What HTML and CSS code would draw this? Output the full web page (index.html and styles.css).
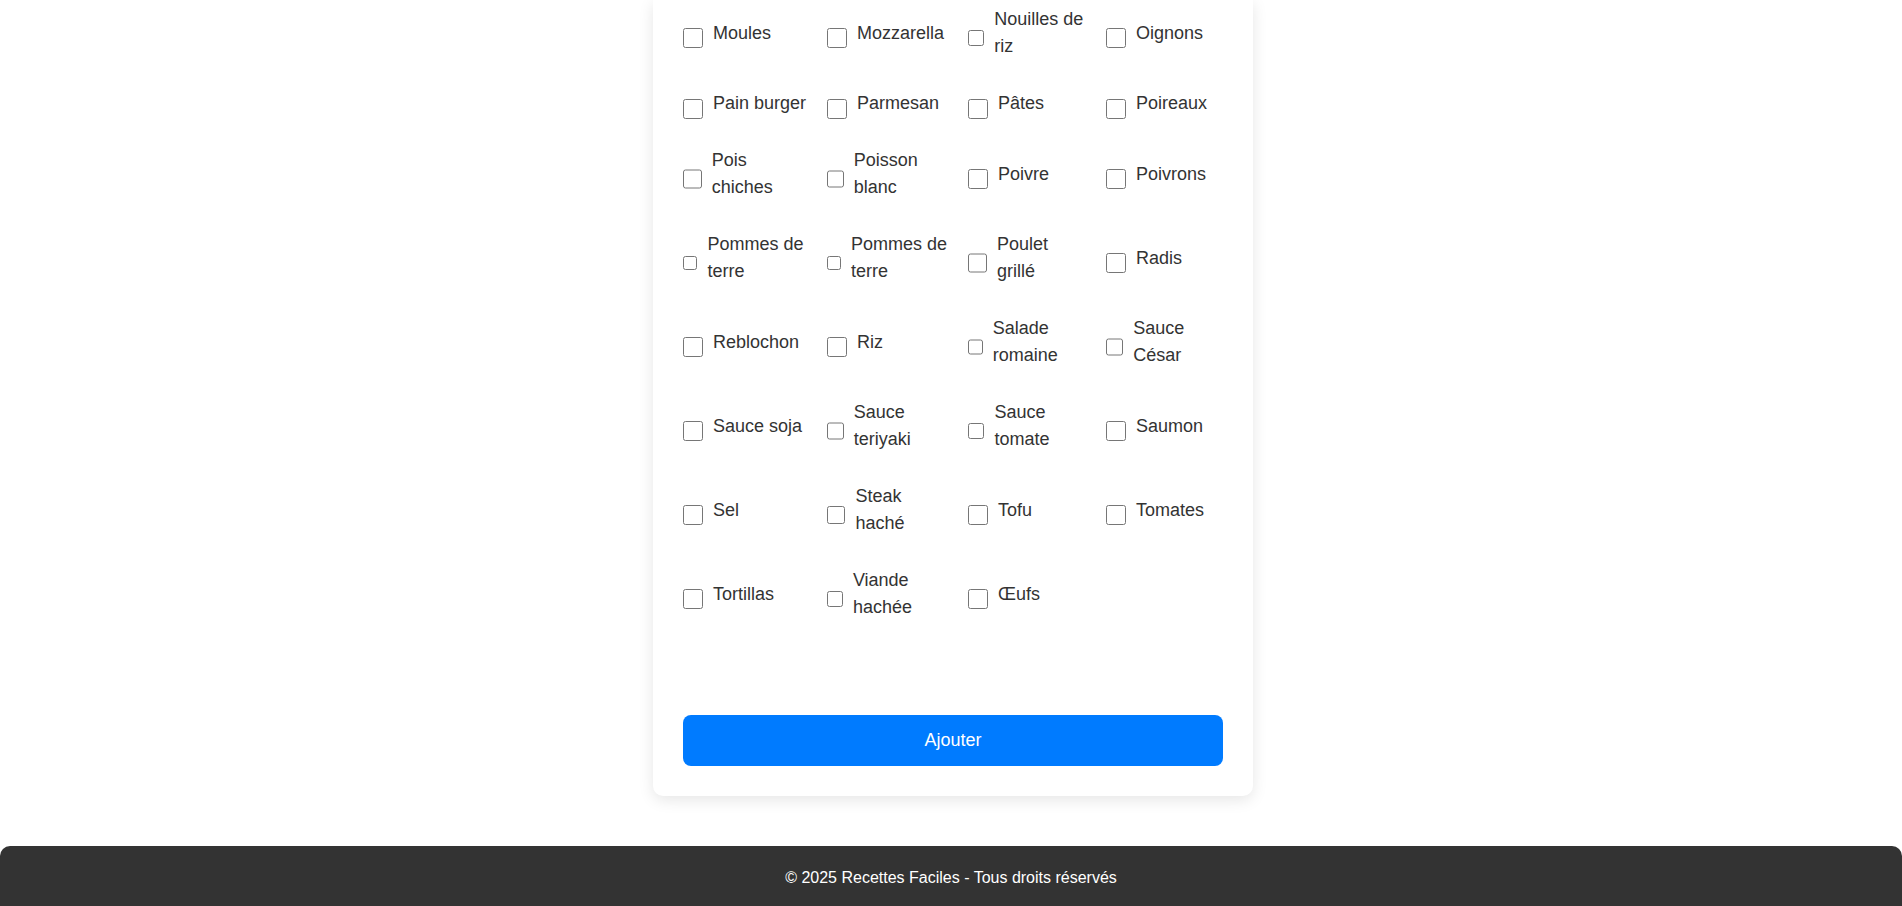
FILE: index.html
```html
<!DOCTYPE html>
<html lang="fr">
<head>
<meta charset="utf-8">
<title>Recettes Faciles - Ajouter une recette</title>
<link rel="stylesheet" href="styles.css">
</head>
<body>
<main class="page">
  <form class="card">
    <div class="ingredients">
      <label class="ing"><input type="checkbox">Moules</label>
      <label class="ing"><input type="checkbox">Mozzarella</label>
      <label class="ing"><input type="checkbox">Nouilles de riz</label>
      <label class="ing"><input type="checkbox">Oignons</label>
      <label class="ing"><input type="checkbox">Pain burger</label>
      <label class="ing"><input type="checkbox">Parmesan</label>
      <label class="ing"><input type="checkbox">Pâtes</label>
      <label class="ing"><input type="checkbox">Poireaux</label>
      <label class="ing"><input type="checkbox">Pois chiches</label>
      <label class="ing"><input type="checkbox">Poisson blanc</label>
      <label class="ing"><input type="checkbox">Poivre</label>
      <label class="ing"><input type="checkbox">Poivrons</label>
      <label class="ing"><input type="checkbox">Pommes de terre</label>
      <label class="ing"><input type="checkbox">Pommes de terre</label>
      <label class="ing"><input type="checkbox">Poulet grillé</label>
      <label class="ing"><input type="checkbox">Radis</label>
      <label class="ing"><input type="checkbox">Reblochon</label>
      <label class="ing"><input type="checkbox">Riz</label>
      <label class="ing"><input type="checkbox">Salade romaine</label>
      <label class="ing"><input type="checkbox">Sauce César</label>
      <label class="ing"><input type="checkbox">Sauce soja</label>
      <label class="ing"><input type="checkbox">Sauce teriyaki</label>
      <label class="ing"><input type="checkbox">Sauce tomate</label>
      <label class="ing"><input type="checkbox">Saumon</label>
      <label class="ing"><input type="checkbox">Sel</label>
      <label class="ing"><input type="checkbox">Steak haché</label>
      <label class="ing"><input type="checkbox">Tofu</label>
      <label class="ing"><input type="checkbox">Tomates</label>
      <label class="ing"><input type="checkbox">Tortillas</label>
      <label class="ing"><input type="checkbox">Viande hachée</label>
      <label class="ing"><input type="checkbox">Œufs</label>
    </div>
    <button type="button" class="submit">Ajouter</button>
  </form>
</main>
<footer class="footer">© 2025 Recettes Faciles - Tous droits réservés</footer>
</body>
</html>
```

FILE: styles.css
```css
* {
  box-sizing: border-box;
}

html, body {
  margin: 0;
  padding: 0;
  background: #ffffff;
}

body {
  font-family: "Liberation Sans", Arial, sans-serif;
  color: #333333;
  overflow: hidden;
}

.page {
  display: flex;
  justify-content: center;
  padding: 0 0 50px 4px;
}

.card {
  width: 600px;
  background: #ffffff;
  border-radius: 0 0 10px 10px;
  box-shadow: 0 4px 15px rgba(0, 0, 0, 0.1);
  padding: 6px 30px 30px;
  display: flex;
  flex-direction: column;
}

.ingredients {
  display: grid;
  grid-template-columns: 124px 121px 118px 117px;
  column-gap: 20px;
  row-gap: 30px;
  margin-bottom: 93.5px;
}

.ing {
  display: flex;
  align-items: center;
  font-size: 18px;
  line-height: 1.5;
  color: #333333;
}

.ing input {
  width: 20px;
  height: 20px;
  margin: 5px 10px -5px 0;
}

.submit {
  display: block;
  width: 100%;
  border: none;
  border-radius: 8px;
  background: #007bff;
  color: #ffffff;
  font-family: "Liberation Sans", Arial, sans-serif;
  font-size: 18px;
  line-height: 21px;
  padding: 15px;
  cursor: pointer;
}

.footer {
  background: #333333;
  color: #ffffff;
  text-align: center;
  font-size: 16px;
  line-height: 20.5px;
  padding: 22px 20px 18px;
  border-radius: 10px 10px 0 0;
}
```
